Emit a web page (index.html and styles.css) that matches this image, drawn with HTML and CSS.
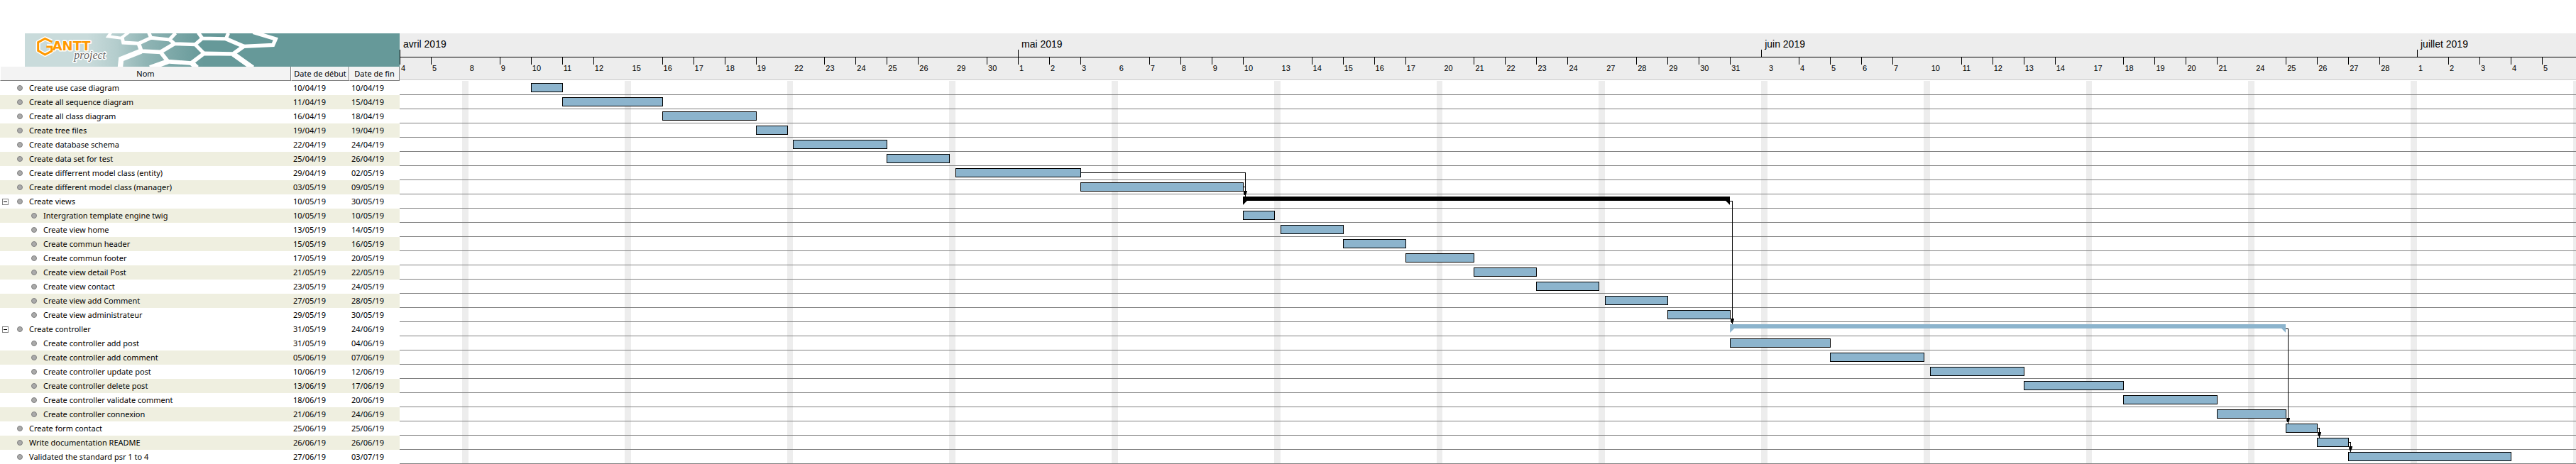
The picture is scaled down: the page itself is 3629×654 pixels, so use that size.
FILE: index.html
```html
<!DOCTYPE html>
<html lang="fr">
<head>
<meta charset="utf-8">
<title>GanttProject</title>
<link rel="stylesheet" href="styles.css">
</head>
<body>
<main class="gantt">
<section class="tasks">
<svg class="banner" viewBox="105 9 1584 141" preserveAspectRatio="xMinYMin slice" role="img" aria-label="Gantt project">
<defs><linearGradient id="fade" gradientUnits="userSpaceOnUse" x1="370" y1="0" x2="860" y2="0"><stop offset="0" stop-color="#c9dbdb"/><stop offset="0.25" stop-color="#b4cdcd"/><stop offset="0.5" stop-color="#90b5b5"/><stop offset="1" stop-color="#669999"/></linearGradient></defs>
<rect x="105" y="9" width="1584" height="141" fill="url(#fade)"/>
<g fill="none" stroke="#fff" stroke-linejoin="miter">
<path stroke-width="12" d="M470 4L457 22L512 29L545 4"/>
<path stroke-width="15" d="M516 26L521 48L586 52L638 28L629 6M638 28L716 36L742 8"/>
<path stroke-width="15" d="M716 34L737 53L825 56L855 30L955 32L965 8M855 30L838 6M825 56L862 94"/>
<path stroke-width="17" d="M586 52L597 84L678 88L737 53M955 32L1030 64L985 96L862 94L808 135L710 128L678 88"/>
<path stroke-width="16" d="M1030 64L1154 58L1165 33L1070 4"/>
<path stroke-width="22" d="M597 84L512 118L508 155M985 96L1068 155M710 128L634 155M808 132L832 155"/>
</g>
<g stroke="#fff" stroke-width="9" stroke-linejoin="round" paint-order="stroke">
<path fill="none" stroke-width="18" d="M218 43L190 31L161 47V82L190 99L218 84V64H198"/>
<text class="brand-sub" x="313" y="116">project</text>
<text class="brand" x="221" y="82">ANTT</text>
</g>
<path fill="none" stroke="#f90" stroke-width="9" d="M220 45L190 31L161 47V82L190 99L218 84V66H196"/>
</svg>
<table class="sheet">
<colgroup><col><col class="col-start"><col class="col-end"></colgroup>
<thead><tr><th>Nom</th><th>Date de début</th><th>Date de fin</th></tr></thead>
<tbody>
<tr><td><span class="task">Create use case diagram</span></td><td>10/04/19</td><td>10/04/19</td></tr>
<tr class="alt"><td><span class="task">Create all sequence diagram</span></td><td>11/04/19</td><td>15/04/19</td></tr>
<tr><td><span class="task">Create all class diagram</span></td><td>16/04/19</td><td>18/04/19</td></tr>
<tr class="alt"><td><span class="task">Create tree files</span></td><td>19/04/19</td><td>19/04/19</td></tr>
<tr><td><span class="task">Create database schema</span></td><td>22/04/19</td><td>24/04/19</td></tr>
<tr class="alt"><td><span class="task">Create data set for test</span></td><td>25/04/19</td><td>26/04/19</td></tr>
<tr><td><span class="task">Create differrent model class (entity)</span></td><td>29/04/19</td><td>02/05/19</td></tr>
<tr class="alt"><td><span class="task">Create different model class (manager)</span></td><td>03/05/19</td><td>09/05/19</td></tr>
<tr><td><span class="task group"><button class="toggle" aria-label="Replier Create views" aria-expanded="true"></button>Create views</span></td><td>10/05/19</td><td>30/05/19</td></tr>
<tr class="alt"><td><span class="task sub">Intergration template engine twig</span></td><td>10/05/19</td><td>10/05/19</td></tr>
<tr><td><span class="task sub">Create view home</span></td><td>13/05/19</td><td>14/05/19</td></tr>
<tr class="alt"><td><span class="task sub">Create commun header</span></td><td>15/05/19</td><td>16/05/19</td></tr>
<tr><td><span class="task sub">Create commun footer</span></td><td>17/05/19</td><td>20/05/19</td></tr>
<tr class="alt"><td><span class="task sub">Create view detail Post</span></td><td>21/05/19</td><td>22/05/19</td></tr>
<tr><td><span class="task sub">Create view contact</span></td><td>23/05/19</td><td>24/05/19</td></tr>
<tr class="alt"><td><span class="task sub">Create view add Comment</span></td><td>27/05/19</td><td>28/05/19</td></tr>
<tr><td><span class="task sub">Create view administrateur</span></td><td>29/05/19</td><td>30/05/19</td></tr>
<tr><td><span class="task group"><button class="toggle" aria-label="Replier Create controller" aria-expanded="true"></button>Create controller</span></td><td>31/05/19</td><td>24/06/19</td></tr>
<tr><td><span class="task sub">Create controller add post</span></td><td>31/05/19</td><td>04/06/19</td></tr>
<tr class="alt"><td><span class="task sub">Create controller add comment</span></td><td>05/06/19</td><td>07/06/19</td></tr>
<tr><td><span class="task sub">Create controller update post</span></td><td>10/06/19</td><td>12/06/19</td></tr>
<tr class="alt"><td><span class="task sub">Create controller delete post</span></td><td>13/06/19</td><td>17/06/19</td></tr>
<tr><td><span class="task sub">Create controller validate comment</span></td><td>18/06/19</td><td>20/06/19</td></tr>
<tr class="alt"><td><span class="task sub">Create controller connexion</span></td><td>21/06/19</td><td>24/06/19</td></tr>
<tr><td><span class="task">Create form contact</span></td><td>25/06/19</td><td>25/06/19</td></tr>
<tr class="alt"><td><span class="task">Write documentation README</span></td><td>26/06/19</td><td>26/06/19</td></tr>
<tr><td><span class="task">Validated the standard psr 1 to 4</span></td><td>27/06/19</td><td>03/07/19</td></tr>
</tbody>
</table>
</section>
<section class="timeline">
<header class="scale">
<div class="calendar months">
<span style="grid-column:1/24">avril 2019</span><span style="grid-column:24/51">mai 2019</span><span style="grid-column:51/76">juin 2019</span><span style="grid-column:76/82">juillet 2019</span>
</div>
<div class="calendar days">
<span>4</span><span>5</span><i></i>
<span class="monday">8</span><span>9</span><span>10</span><span>11</span><span>12</span><i></i>
<span class="monday">15</span><span>16</span><span>17</span><span>18</span><span>19</span><i></i>
<span class="monday">22</span><span>23</span><span>24</span><span>25</span><span>26</span><i></i>
<span class="monday">29</span><span>30</span><span>1</span><span>2</span><span>3</span><i></i>
<span class="monday">6</span><span>7</span><span>8</span><span>9</span><span>10</span><i></i>
<span class="monday">13</span><span>14</span><span>15</span><span>16</span><span>17</span><i></i>
<span class="monday">20</span><span>21</span><span>22</span><span>23</span><span>24</span><i></i>
<span class="monday">27</span><span>28</span><span>29</span><span>30</span><span>31</span><i></i>
<span class="monday">3</span><span>4</span><span>5</span><span>6</span><span>7</span><i></i>
<span class="monday">10</span><span>11</span><span>12</span><span>13</span><span>14</span><i></i>
<span class="monday">17</span><span>18</span><span>19</span><span>20</span><span>21</span><i></i>
<span class="monday">24</span><span>25</span><span>26</span><span>27</span><span>28</span><i></i>
<span class="monday">1</span><span>2</span><span>3</span><span>4</span><span>5</span><i></i>
</div>
</header>
<div class="calendar chart">
<div class="weekend" style="grid-column:3"></div>
<div class="weekend" style="grid-column:9"></div>
<div class="weekend" style="grid-column:15"></div>
<div class="weekend" style="grid-column:21"></div>
<div class="weekend" style="grid-column:27"></div>
<div class="weekend" style="grid-column:33"></div>
<div class="weekend" style="grid-column:39"></div>
<div class="weekend" style="grid-column:45"></div>
<div class="weekend" style="grid-column:51"></div>
<div class="weekend" style="grid-column:57"></div>
<div class="weekend" style="grid-column:63"></div>
<div class="weekend" style="grid-column:69"></div>
<div class="weekend" style="grid-column:75"></div>
<div class="weekend" style="grid-column:81"></div>
<div class="rules"></div>
<div class="bar" style="grid-area:1/6/2/7"></div>
<div class="bar" style="grid-area:2/7/3/11"></div>
<div class="bar" style="grid-area:3/11/4/14"></div>
<div class="bar" style="grid-area:4/14/5/15"></div>
<div class="bar" style="grid-area:5/16/6/19"></div>
<div class="bar" style="grid-area:6/19/7/21"></div>
<div class="bar" style="grid-area:7/22/8/26"></div>
<div class="bar" style="grid-area:8/26/9/32"></div>
<div class="summary" style="grid-area:9/32/10/50"></div>
<div class="bar" style="grid-area:10/32/11/33"></div>
<div class="bar" style="grid-area:11/34/12/36"></div>
<div class="bar" style="grid-area:12/36/13/38"></div>
<div class="bar" style="grid-area:13/38/14/41"></div>
<div class="bar" style="grid-area:14/41/15/43"></div>
<div class="bar" style="grid-area:15/43/16/45"></div>
<div class="bar" style="grid-area:16/46/17/48"></div>
<div class="bar" style="grid-area:17/48/18/50"></div>
<div class="summary light" style="grid-area:18/50/19/71"></div>
<div class="bar" style="grid-area:19/50/20/54"></div>
<div class="bar" style="grid-area:20/54/21/57"></div>
<div class="bar" style="grid-area:21/58/22/61"></div>
<div class="bar" style="grid-area:22/61/23/65"></div>
<div class="bar" style="grid-area:23/65/24/68"></div>
<div class="bar" style="grid-area:24/68/25/71"></div>
<div class="bar" style="grid-area:25/71/26/72"></div>
<div class="bar" style="grid-area:26/72/27/73"></div>
<div class="bar" style="grid-area:27/73/28/79"></div>
<div class="link long" style="grid-area:7/26/9/32"></div>
<div class="link" style="grid-area:8/32/9/33"></div>
<div class="link" style="grid-area:9/50/18/51"></div>
<div class="link" style="grid-area:18/71/25/72"></div>
<div class="link" style="grid-area:25/72/26/73"></div>
<div class="link" style="grid-area:26/73/27/74"></div>
</div>
</section>
</main>
</body>
</html>
```
FILE: styles.css
```css
* {
  box-sizing: border-box;
}

body {
  margin: 0;
  background: #fff;
  color: #000;
  font-family: "Noto Sans", "Open Sans", sans-serif;
  font-size: 11px;
}

.gantt {
  display: flex;
  padding-top: 47px;
}

/* Task list */
.tasks {
  flex: 0 0 563px;
}

.banner {
  display: block;
  width: 528px;
  height: 47px;
  margin-left: 35px;
}

.brand {
  font: bold 54px "DejaVu Sans", sans-serif;
  fill: #f90;
}

.brand-sub {
  font: italic 48px "Liberation Serif", serif;
  fill: #666;
}

.sheet {
  width: 100%;
  table-layout: fixed;
  border-collapse: separate;
  border-spacing: 0;
}

.col-start {
  width: 82px;
}

.col-end {
  width: 71px;
}

.sheet th {
  height: 20px;
  padding: 0;
  border-right: 1px solid #808080;
  border-bottom: 1px solid #808080;
  border-left: 1px solid #fff;
  background: #f3f3f3;
  font-weight: normal;
  line-height: 19px;
  white-space: nowrap;
}

.sheet td {
  height: 20px;
  padding: 0 0 0 3px;
  line-height: 20px;
  white-space: nowrap;
}

.alt {
  background: #efefe0;
}

.task {
  display: flex;
  align-items: center;
  height: 20px;
  padding-left: 21px;
}

.task::before {
  content: "";
  order: -1;
  width: 6px;
  height: 6px;
  margin-right: 9px;
  border: 1px solid #808080;
  border-radius: 50%;
  background: #aaa;
}

.sub {
  padding-left: 41px;
}

.group {
  padding-left: 0;
}

.toggle {
  order: -2;
  width: 9px;
  height: 9px;
  margin: 0 12px 0 0;
  padding: 0;
  border: 1px solid #808080;
  background: linear-gradient(#000, #000) center / 5px 1px no-repeat #fff;
}

/* Timeline */
.timeline {
  flex: 1;
  min-width: 0;
  overflow: hidden;
}

.calendar {
  --d: minmax(0, 4400fr);
  --w: minmax(0, 877fr);
  display: grid;
  grid-template-columns:
    var(--d) var(--d)
    repeat(13, var(--w) var(--d) var(--d) var(--d) var(--d) var(--d))
    minmax(0, 400fr);
}

.scale {
  height: 66px;
  margin-bottom: 1px;
  border-bottom: 1px solid #ccc;
  background: #ededed;
  font-family: "Liberation Sans", Arial, sans-serif;
}

.months {
  height: 33px;
  font-size: 14px;
  line-height: 30px;
}

.months span {
  padding-left: 5px;
  background: linear-gradient(#000, #000) left bottom / 1px 10px no-repeat;
}

.days {
  border-top: 1px solid #000;
  line-height: 31px;
}

.days span {
  padding-left: 2px;
  background: linear-gradient(#000, #000) left top / 1px 10px no-repeat;
}

.days .monday {
  background: none;
}

.chart {
  grid-template-rows: repeat(27, 20px);
}

.weekend {
  grid-row: 1 / -1;
  background: #ededed;
}

.rules {
  grid-area: 1 / 1 / -1 / -1;
  background: repeating-linear-gradient(transparent 0 19px, #808080 19px 20px);
}

.bar {
  height: 13px;
  margin: 3px -1px 0 0;
  border: 1px solid #000;
  background: #8cb4cd;
}

.summary {
  height: 12px;
  margin-top: 3px;
  background: #000;
  clip-path: polygon(0 0, 100% 0, 100% 100%, calc(100% - 6px) 50%, 6px 50%, 0 100%);
}

.light {
  background: #8cb4cd;
}

/* Dependency: leaves the end of a task and drops onto the next one */
.link {
  position: relative;
  width: 4px;
  margin: 9px 0 -3px;
  border-top: 1px solid #000;
  border-right: 1px solid #000;
}

.long {
  width: auto;
  margin-right: -4px;
  margin-left: 1px;
}

.link::after {
  content: "";
  position: absolute;
  right: -3px;
  bottom: 2px;
  width: 5px;
  height: 6px;
  background: #000;
  clip-path: polygon(0 0, 100% 0, 80% 60%, 60% 100%, 20% 100%, 0 60%);
}
```
